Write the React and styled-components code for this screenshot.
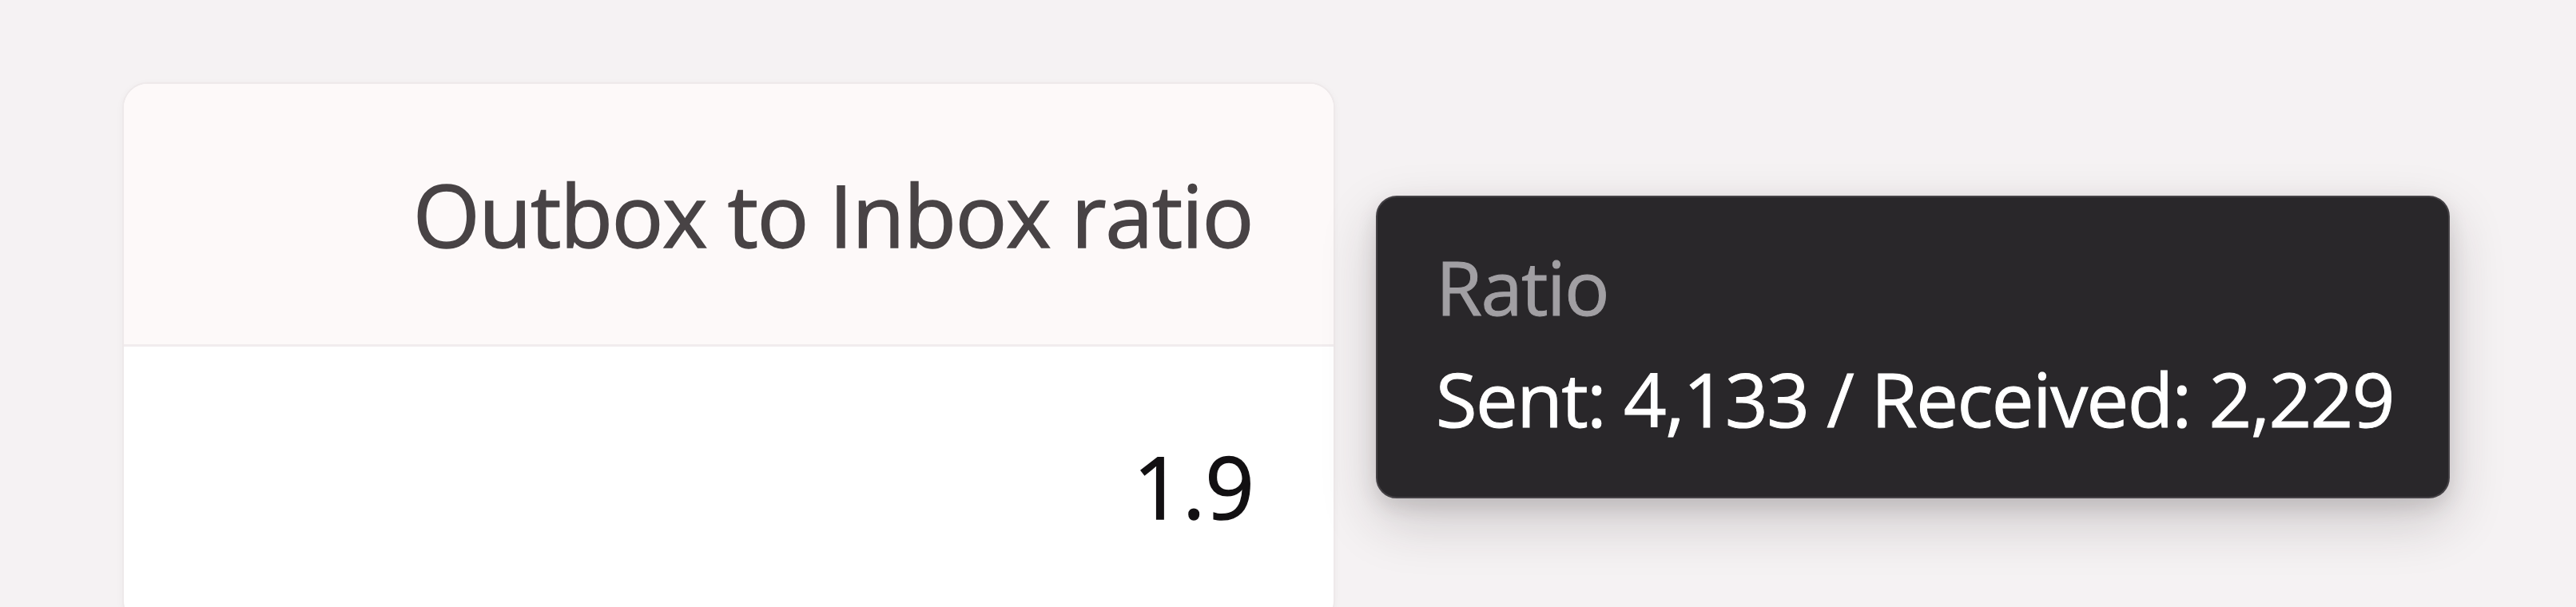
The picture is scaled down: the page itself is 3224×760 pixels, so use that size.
import React from 'react';
import styled, { createGlobalStyle } from 'styled-components';

const GlobalStyle = createGlobalStyle`
  html, body {
    margin: 0;
    padding: 0;
    height: 760px;
    overflow: hidden;
    background: #f5f2f3;
    font-family: "Open Sans", "Noto Sans", sans-serif;
  }
`;

const Page = styled.div`
  padding: 103px 0 0 153px;
`;

const CardWrap = styled.div`
  position: relative;
  width: 1518px;
`;

const Card = styled.div`
  border: 2px solid #eee9ea;
  border-radius: 32px;
  overflow: hidden;
  background: #ffffff;
  box-shadow: 0 2px 10px rgba(60, 40, 45, 0.04);
`;

const HeaderCell = styled.div`
  display: flex;
  align-items: center;
  justify-content: flex-end;
  height: 326px;
  padding-right: 101px;
  background: #fdf9f9;
  border-bottom: 3px solid #f1ecee;
  font-size: 108px;
  letter-spacing: -1.5px;
  color: #484345;
  -webkit-text-stroke: 1.4px #484345;
`;

const ValueCell = styled.div`
  display: flex;
  align-items: center;
  justify-content: flex-end;
  height: 348px;
  padding-right: 99px;
  font-size: 108px;
  color: #121012;
  -webkit-text-stroke: 1.4px #121012;
  font-variant-numeric: tabular-nums;
`;

const Tooltip = styled.div`
  position: absolute;
  left: calc(100% + 51px);
  top: 142px;
  padding: 42px 68px 53px 73px;
  background: #29272a;
  border: 2px solid #444145;
  border-radius: 26px;
  white-space: nowrap;
  box-shadow: 0 28px 70px rgba(40, 30, 35, 0.2), 0 10px 24px rgba(40, 30, 35, 0.12);
`;

const TipLine = styled.div`
  font-size: 94px;
  line-height: 140px;
  letter-spacing: -1.6px;
  color: ${p => (p.$muted ? '#a19fa3' : '#ffffff')};
  -webkit-text-stroke: 1px ${p => (p.$muted ? '#a19fa3' : '#ffffff')};
`;

const App = () => (
  <Page>
    <GlobalStyle />
    <CardWrap>
      <Card>
        <HeaderCell>Outbox to Inbox ratio</HeaderCell>
        <ValueCell>1.9</ValueCell>
      </Card>
      <Tooltip>
        <TipLine $muted>Ratio</TipLine>
        <TipLine>Sent: 4,133 / Received: 2,229</TipLine>
      </Tooltip>
    </CardWrap>
  </Page>
);

export default App;
